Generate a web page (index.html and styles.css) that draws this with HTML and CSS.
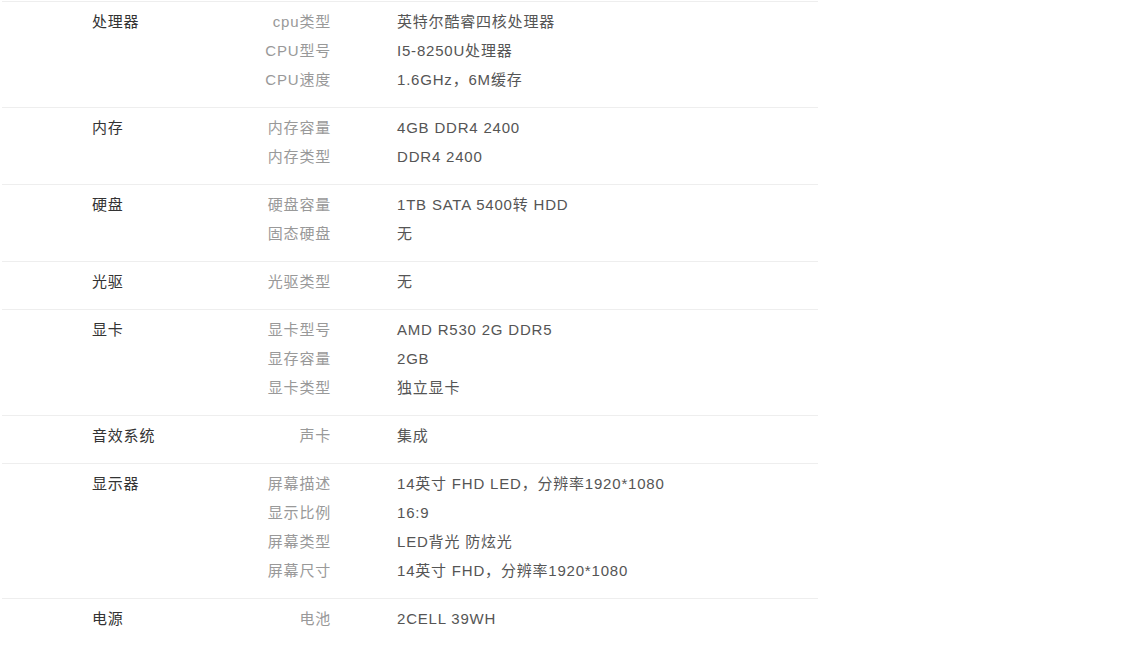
FILE: index.html
```html
<!DOCTYPE html>
<html lang="zh-CN">
<head>
<meta charset="utf-8">
<title>规格参数</title>
<link rel="stylesheet" href="styles.css">
</head>
<body>
<div class="specs">
  <div class="group">
    <div class="cat">处理器</div>
    <div class="rows">
      <div class="row"><span class="label">cpu类型</span><span class="value">英特尔酷睿四核处理器</span></div>
      <div class="row"><span class="label">CPU型号</span><span class="value">I5-8250U处理器</span></div>
      <div class="row"><span class="label">CPU速度</span><span class="value">1.6GHz，6M缓存</span></div>
    </div>
  </div>
  <div class="group">
    <div class="cat">内存</div>
    <div class="rows">
      <div class="row"><span class="label">内存容量</span><span class="value">4GB DDR4 2400</span></div>
      <div class="row"><span class="label">内存类型</span><span class="value">DDR4 2400</span></div>
    </div>
  </div>
  <div class="group">
    <div class="cat">硬盘</div>
    <div class="rows">
      <div class="row"><span class="label">硬盘容量</span><span class="value">1TB SATA 5400转 HDD</span></div>
      <div class="row"><span class="label">固态硬盘</span><span class="value">无</span></div>
    </div>
  </div>
  <div class="group">
    <div class="cat">光驱</div>
    <div class="rows">
      <div class="row"><span class="label">光驱类型</span><span class="value">无</span></div>
    </div>
  </div>
  <div class="group">
    <div class="cat">显卡</div>
    <div class="rows">
      <div class="row"><span class="label">显卡型号</span><span class="value">AMD R530 2G DDR5</span></div>
      <div class="row"><span class="label">显存容量</span><span class="value">2GB</span></div>
      <div class="row"><span class="label">显卡类型</span><span class="value">独立显卡</span></div>
    </div>
  </div>
  <div class="group">
    <div class="cat">音效系统</div>
    <div class="rows">
      <div class="row"><span class="label">声卡</span><span class="value">集成</span></div>
    </div>
  </div>
  <div class="group">
    <div class="cat">显示器</div>
    <div class="rows">
      <div class="row"><span class="label">屏幕描述</span><span class="value">14英寸 FHD LED，分辨率1920*1080</span></div>
      <div class="row"><span class="label">显示比例</span><span class="value">16:9</span></div>
      <div class="row"><span class="label">屏幕类型</span><span class="value">LED背光 防炫光</span></div>
      <div class="row"><span class="label">屏幕尺寸</span><span class="value">14英寸 FHD，分辨率1920*1080</span></div>
    </div>
  </div>
  <div class="group">
    <div class="cat">电源</div>
    <div class="rows">
      <div class="row"><span class="label">电池</span><span class="value">2CELL 39WH</span></div>
    </div>
  </div>
</div>
</body>
</html>
```

FILE: styles.css
```css
html, body {
  margin: 0;
  padding: 0;
  background: #fff;
}

body {
  font-family: "Liberation Sans", "Noto Sans CJK SC", sans-serif;
  font-size: 15px;
  letter-spacing: 0.8px;
  color: #555;
}

.specs {
  width: 816px;
  padding: 1px 0 0 2px;
}

.group {
  display: flex;
  border-top: 1px solid #eee;
  padding: 5px 0 13px 90px;
}

.cat {
  width: 150px;
  line-height: 29px;
  color: #333;
}

.rows {
  display: flex;
  flex-direction: column;
}

.row {
  display: flex;
  line-height: 29px;
}

.label {
  width: 89px;
  text-align: right;
  color: #999;
}

.value {
  margin-left: 66px;
  color: #555;
}
```
